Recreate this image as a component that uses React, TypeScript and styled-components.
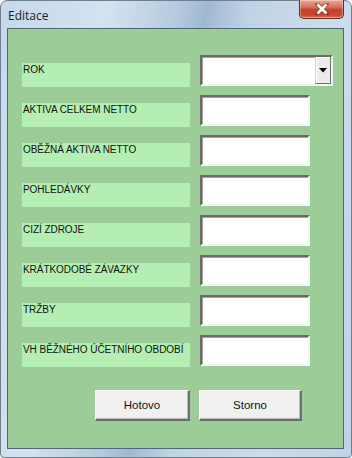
import React from 'react';
import styled, { createGlobalStyle } from 'styled-components';

const GlobalStyle = createGlobalStyle`
  html, body {
    margin: 0;
    padding: 0;
    background: #ffffff;
  }
`;

const fields = [
  'AKTIVA CELKEM NETTO',
  'OBĚŽNÁ AKTIVA NETTO',
  'POHLEDÁVKY',
  'CIZÍ ZDROJE',
  'KRÁTKODOBÉ ZÁVAZKY',
  'TRŽBY',
  'VH BĚŽNÉHO ÚČETNÍHO OBDOBÍ',
];

const CloseIcon = () => (
  <svg width="14" height="12" viewBox="0 0 14 12">
    <path
      d="M2 1 L12 11 M12 1 L2 11"
      stroke="#5a2018"
      strokeWidth="4.4"
      strokeLinecap="round"
      fill="none"
      opacity="0.45"
    />
    <path d="M2.5 1.5 L11.5 10.5 M11.5 1.5 L2.5 10.5" stroke="#ffffff" strokeWidth="2.6" fill="none" />
  </svg>
);

const Arrow = () => (
  <svg width="8" height="5" viewBox="0 0 8 5">
    <path d="M0 0 H8 L4 4.5 Z" fill="#000" />
  </svg>
);

const App = () => {
  return (
    <>
      <GlobalStyle />
      <WindowFrame>
        <TitleBar>
          <Title>Editace</Title>
          <CloseButton>
            <CloseIcon />
          </CloseButton>
        </TitleBar>
        <Client>
          <Form>
            <Row>
              <Label>ROK</Label>
              <Combo>
                <ComboText />
                <DropButton>
                  <Arrow />
                </DropButton>
              </Combo>
            </Row>
            {fields.map((f) => (
              <Row key={f}>
                <Label>{f}</Label>
                <TextBox />
              </Row>
            ))}
          </Form>
          <Buttons>
            <Button $width={95}>Hotovo</Button>
            <Button $width={103}>Storno</Button>
          </Buttons>
        </Client>
      </WindowFrame>
    </>
  );
};

const WindowFrame = styled.div`
  width: 352px;
  height: 458px;
  box-sizing: border-box;
  display: flex;
  flex-direction: column;
  border-radius: 7px 7px 4px 4px;
  border: 1px solid #6f7f90;
  background: linear-gradient(
    100deg,
    #c6d8ea 0%,
    #d4e2f0 25%,
    #b4c9de 42%,
    #9fb8d2 48%,
    #c0d3e6 58%,
    #cddcec 80%,
    #bfd2e6 100%
  );
  font-family: 'Liberation Sans', Arial, sans-serif;
`;

const TitleBar = styled.div`
  height: 27px;
  display: flex;
  align-items: flex-start;
  justify-content: space-between;
  padding: 0 7px 0 7px;
`;

const Title = styled.div`
  font-family: 'Open Sans', 'Liberation Sans', sans-serif;
  font-size: 12px;
  color: #1c1c1c;
  margin-top: 6px;
`;

const CloseButton = styled.div`
  width: 45px;
  height: 19px;
  margin-top: -1px;
  box-sizing: border-box;
  border: 1px solid #6b2a22;
  border-top: none;
  border-radius: 0 0 5px 5px;
  background: linear-gradient(180deg, #e8a898 0%, #d7705d 40%, #c0402c 55%, #c64a30 85%, #e07a50 100%);
  box-shadow: inset 0 0 0 1px rgba(255, 255, 255, 0.35);
  display: flex;
  align-items: center;
  justify-content: center;
`;

const Client = styled.div`
  flex: 1;
  margin: 0 7px 8px 6px;
  border: 1px solid #50677a;
  background: #9ccc98;
  display: flex;
  flex-direction: column;
  padding: 26px 0 0 14px;
`;

const Form = styled.div`
  display: flex;
  flex-direction: column;
  gap: 9px;
`;

const Row = styled.div`
  display: flex;
  align-items: flex-start;
  gap: 10px;
  height: 31px;
`;

const Label = styled.div`
  width: 168px;
  height: 24px;
  margin-top: 8px;
  box-sizing: border-box;
  background: #b4eeb2;
  padding: 0 0 0 1px;
  font-size: 10px;
  line-height: 14px;
  color: #111;
  white-space: nowrap;
  letter-spacing: -0.05px;
`;

const sunken = `
  box-sizing: border-box;
  background: #ffffff;
  border-top: 2px solid #6a6a6a;
  border-left: 2px solid #6a6a6a;
  border-bottom: 2px solid #f4f4f4;
  border-right: 2px solid #f4f4f4;
  box-shadow: inset 1px 1px 0 #a0a0a0;
`;

const TextBox = styled.div`
  ${sunken}
  width: 110px;
  height: 31px;
`;

const Combo = styled.div`
  ${sunken}
  width: 133px;
  height: 31px;
  display: flex;
  justify-content: flex-end;
`;

const ComboText = styled.div`
  flex: 1;
`;

const DropButton = styled.div`
  width: 16px;
  box-sizing: border-box;
  background: #ececec;
  border-left: 1px solid #d0d0d0;
  border-right: 1px solid #707070;
  border-bottom: 1px solid #707070;
  box-shadow: inset 1px 1px 0 #ffffff;
  display: flex;
  align-items: center;
  justify-content: center;
`;

const Buttons = styled.div`
  display: flex;
  gap: 9px;
  margin: 24px 0 0 73px;
`;

const Button = styled.div<{ $width: number }>`
  width: ${({ $width }) => $width}px;
  height: 31px;
  box-sizing: border-box;
  background: #f0f0f0;
  border-top: 1px solid #ffffff;
  border-left: 1px solid #ffffff;
  border-right: 2px solid #6e6e6e;
  border-bottom: 2px solid #6e6e6e;
  box-shadow: inset -1px -1px 0 #b8b8b8;
  display: flex;
  align-items: center;
  justify-content: center;
  font-size: 11.5px;
  color: #111;
`;

export default App;
